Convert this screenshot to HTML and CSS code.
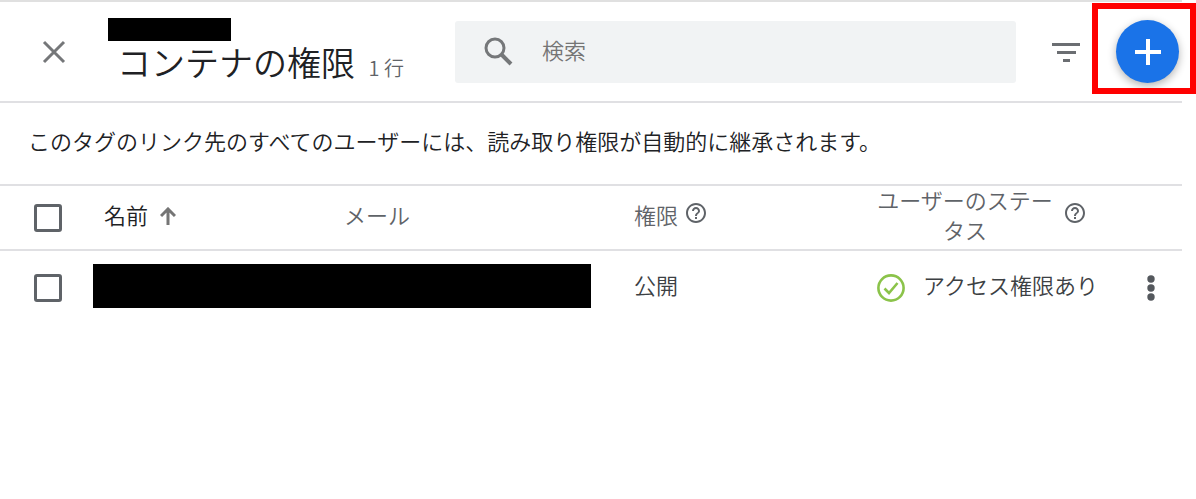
FILE: index.html
```
<!DOCTYPE html>
<html lang="ja">
<head>
    <meta charset="UTF-8">
    <meta name="viewport" content="width=device-width, initial-scale=1.0">
    <title>コンテナの権限</title>
    <link rel="stylesheet" href="styles.css">
</head>
<body>
<div class="sheet">
    <header class="toolbar">
        <button type="button" class="icon-button close" aria-label="閉じる">
            <svg width="24" height="24" viewBox="0 0 24 24"><path d="M2 2L22 22M22 2L2 22" fill="none" stroke="#757779" stroke-width="3"/></svg>
        </button>
        <div class="heading">
            <span class="mask mask-title"></span>
            <h1>コンテナの権限 <small>1 行</small></h1>
        </div>
        <label class="search">
            <svg width="30" height="30" viewBox="0 0 30 30" fill="none" stroke="#757779"><circle cx="11" cy="11" r="9" stroke-width="3"/><path d="M17 17L27 27" stroke-width="4"/></svg>
            <input type="search" placeholder="検索" aria-label="検索">
        </label>
        <button type="button" class="icon-button filter" aria-label="フィルタ">
            <svg width="30" height="20" viewBox="0 0 30 20" fill="#6b6e72"><path d="M1 1h28v3H1zM6 9h19v3H6zM12 17h7v3h-7z"/></svg>
        </button>
        <div class="add-wrap">
            <button type="button" class="add" aria-label="追加">
                <svg width="28" height="28" viewBox="0 0 28 28"><path d="M14 1V27M1 14H27" fill="none" stroke="#fff" stroke-width="4"/></svg>
            </button>
            <span class="highlight"></span>
        </div>
    </header>

    <p class="note">このタグのリンク先のすべてのユーザーには、読み取り権限が自動的に継承されます。</p>

    <table class="users">
        <colgroup>
            <col class="col-check">
            <col class="col-name">
            <col class="col-mail">
            <col class="col-role">
            <col class="col-status">
            <col class="col-menu">
        </colgroup>
        <thead>
            <tr>
                <th class="check"><input type="checkbox" aria-label="すべて選択"></th>
                <th class="name">
                    <span class="cell">名前
                        <svg class="sort" width="16" height="18" viewBox="0 0 16 18"><path d="M8 18V2M1 9L8 2L15 9" fill="none" stroke="#757575" stroke-width="3"/></svg>
                    </span>
                </th>
                <th><span class="cell">メール</span></th>
                <th>
                    <span class="cell">権限
                        <svg class="help" width="20" height="20" viewBox="2 2 20 20" fill="#5f6368"><path d="M11 18h2v-2h-2v2zm1-16C6.480 2 2 6.480 2 12s4.480 10 10 10 10-4.480 10-10S17.520 2 12 2zm0 18c-4.410 0-8-3.590-8-8s3.590-8 8-8 8 3.590 8 8-3.590 8-8 8zm0-14c-2.210 0-4 1.790-4 4h2c0-1.100.9-2 2-2s2 .9 2 2c0 2-3 1.750-3 5h2c0-2.250 3-2.500 3-5 0-2.210-1.790-4-4-4z"/></svg>
                    </span>
                </th>
                <th colspan="2">
                    <span class="cell status-head"><span class="status-label">ユーザーのステータス</span>
                        <svg class="help" width="20" height="20" viewBox="2 2 20 20" fill="#5f6368"><path d="M11 18h2v-2h-2v2zm1-16C6.480 2 2 6.480 2 12s4.480 10 10 10 10-4.480 10-10S17.520 2 12 2zm0 18c-4.410 0-8-3.590-8-8s3.590-8 8-8 8 3.590 8 8-3.590 8-8 8zm0-14c-2.210 0-4 1.790-4 4h2c0-1.100.9-2 2-2s2 .9 2 2c0 2-3 1.750-3 5h2c0-2.250 3-2.500 3-5 0-2.210-1.790-4-4-4z"/></svg>
                    </span>
                </th>
            </tr>
        </thead>
        <tbody>
            <tr>
                <td class="check"><input type="checkbox" aria-label="ユーザーを選択"></td>
                <td class="masked" colspan="2"><span class="mask mask-user"></span></td>
                <td><span class="cell">公開</span></td>
                <td>
                    <span class="cell status">
                        <svg class="ok" width="28" height="28" viewBox="0 0 28 28" fill="none" stroke="#8bc34a"><circle cx="14" cy="14" r="12.600" stroke-width="2.600"/><path d="M7.500 14.500L12 19L20.500 9" stroke-width="2.600"/></svg>
                        アクセス権限あり
                    </span>
                </td>
                <td class="menu">
                    <button type="button" class="icon-button" aria-label="その他">
                        <svg width="8" height="26" viewBox="0 0 8 26" fill="#54585d"><circle cx="4" cy="4" r="3.700"/><circle cx="4" cy="13" r="3.700"/><circle cx="4" cy="22" r="3.700"/></svg>
                    </button>
                </td>
            </tr>
        </tbody>
    </table>
</div>
</body>
</html>
```
FILE: styles.css
```
* {
    box-sizing: border-box;
}

body {
    margin: 0;
    background: #fff;
    color: #3c4043;
    font-family: "Noto Sans CJK JP", sans-serif;
    font-size: 22px;
    font-weight: 350;
    line-height: 30px;
}

svg {
    display: block;
    flex: none;
}

.sheet {
    margin-right: 14px;
    border-top: 2px solid #e0e0e0;
}

/* Toolbar */
.toolbar {
    display: flex;
    align-items: center;
    height: 101px;
    border-bottom: 2px solid #e0e0e3;
}

.icon-button {
    display: flex;
    align-items: center;
    justify-content: center;
    padding: 0;
    border: none;
    background: none;
    cursor: pointer;
}

.close {
    width: 108px;
    height: 48px;
}

.heading {
    width: 347px;
    flex: none;
    padding-top: 4px;
}

.mask {
    display: block;
    background: #000;
}

.mask-title {
    width: 123px;
    height: 23px;
}

h1 {
    margin: 0;
    padding-left: 9px;
    color: #202124;
    font-size: 34px;
    font-weight: 350;
    line-height: 42px;
    white-space: nowrap;
}

h1 small {
    margin-left: 6px;
    color: #5f6368;
    font-size: 20px;
}

.search {
    display: flex;
    flex: 1;
    align-items: center;
    gap: 28px;
    height: 62px;
    padding: 0 29px;
    border-radius: 3px;
    background: #f1f3f4;
}

.search input {
    flex: 1;
    min-width: 0;
    padding: 0 0 6px;
    border: none;
    outline: none;
    background: none;
    color: #3c4043;
    font: inherit;
}

.search input::placeholder {
    color: #757575;
    opacity: 1;
}

.filter {
    width: 100px;
    height: 48px;
}

.add-wrap {
    position: relative;
    padding-right: 3px;
}

.add {
    display: flex;
    align-items: center;
    justify-content: center;
    width: 63px;
    height: 63px;
    padding: 0;
    border: none;
    border-radius: 50%;
    background: #1a73e8;
    box-shadow: 0 3px 8px rgba(0, 0, 0, 0.3);
    cursor: pointer;
}

/* Red frame over the add button */
.highlight {
    position: absolute;
    top: -17px;
    right: -14px;
    bottom: -11px;
    left: -24px;
    border: 6px solid #f00;
    pointer-events: none;
}

.note {
    margin: 0;
    padding: 22px 28px 29px;
    border-bottom: 2px solid #e0e0e3;
    color: #202124;
}

/* User table */
.users {
    width: 100%;
    border-collapse: collapse;
    table-layout: fixed;
}

.col-check {
    width: 93px;
}

.col-name {
    width: 251px;
}

.col-role {
    width: 243px;
}

.col-status {
    width: 243px;
}

.col-menu {
    width: 62px;
}

th,
td {
    padding: 0;
    font-weight: 350;
    text-align: left;
    vertical-align: middle;
}

th {
    height: 64px;
    border-bottom: 2px solid #e0e0e3;
    color: #5f6368;
}

td {
    height: 75px;
}

.check {
    padding-left: 34px;
}

.check input {
    display: block;
    appearance: none;
    width: 28px;
    height: 28px;
    margin: 0;
    border: 3px solid #5f6368;
    border-radius: 3px;
    background: #fff;
}

.cell {
    display: flex;
    align-items: center;
    gap: 12px;
    margin-top: -8px;
}

.name {
    padding-left: 11px;
    color: #202124;
}

.sort {
    margin-top: 4px;
}

.help {
    margin: 0 0 2px -4px;
}

.status-label {
    width: 176px;
    text-align: center;
}

.status-head {
    gap: 16px;
}

.status {
    gap: 18px;
    white-space: nowrap;
}

.ok {
    margin-top: 8px;
}

.masked {
    padding-bottom: 4px;
}

.mask-user {
    width: 498px;
    height: 44px;
}

.menu .icon-button {
    width: 62px;
    height: 48px;
}
```
